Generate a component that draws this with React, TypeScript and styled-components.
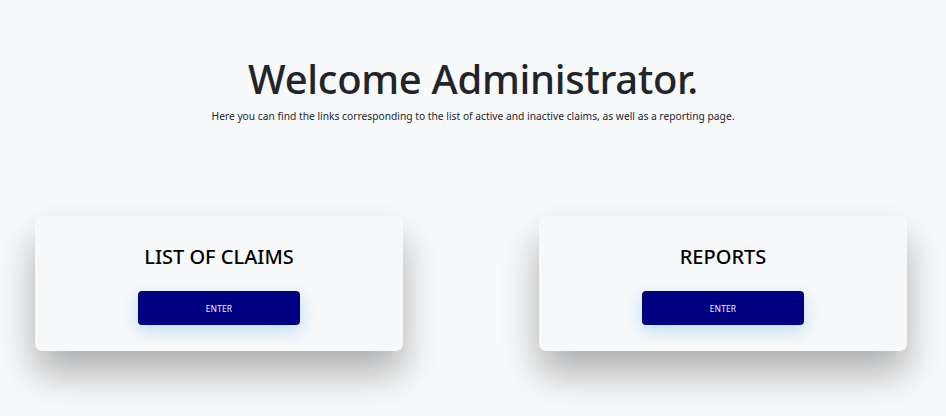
import React from "react";
import styled, { createGlobalStyle } from "styled-components";

const GlobalStyle = createGlobalStyle`
  html, body {
    margin: 0;
    padding: 0;
    background: #f8f9fa;
  }
  body {
    font-family: "Noto Sans", "Open Sans", sans-serif;
    color: #212529;
  }
  * { box-sizing: border-box; }
`;

const Page = styled.div`
  min-height: 416px;
  background: #f8f9fa;
  display: flex;
  flex-direction: column;
`;

const Header = styled.header`
  display: flex;
  flex-direction: column;
  align-items: center;
  padding-top: 55px;
`;

const Title = styled.h1`
  margin: 0;
  font-size: 40px;
  font-weight: 500;
  line-height: 48px;
  letter-spacing: -0.3px;
  color: #212529;
`;

const Subtitle = styled.p`
  margin: 5px 0 0;
  font-size: 10.25px;
  line-height: 16px;
  color: #212529;
`;

const CardsRow = styled.section`
  display: flex;
  justify-content: space-between;
  padding: 0 39px 0 35px;
  margin-top: 92px;
`;

const Card = styled.div`
  width: 368px;
  height: 135px;
  background: #f7f8fa;
  border-radius: 7px;
  box-shadow: 0 22px 38px rgba(0, 0, 0, 0.3);
  display: flex;
  flex-direction: column;
  align-items: center;
  padding-top: 28px;
`;

const CardTitle = styled.h2`
  margin: 0;
  font-size: 20px;
  font-weight: 500;
  line-height: 26px;
  color: #000;
`;

const EnterButton = styled.button`
  margin-top: 21px;
  width: 162px;
  height: 34px;
  border: none;
  border-radius: 4px;
  background: #000080;
  color: #eeeeff;
  font-family: "Noto Sans", "Open Sans", sans-serif;
  font-size: 8.5px;
  letter-spacing: 0.1px;
  cursor: pointer;
  box-shadow: 0 6px 16px rgba(120, 190, 240, 0.45);
`;

const cards = ["LIST OF CLAIMS", "REPORTS"];

export default function App() {
  return (
    <>
      <GlobalStyle />
      <Page>
        <Header>
          <Title>Welcome Administrator.</Title>
          <Subtitle>
            Here you can find the links corresponding to the list of active and inactive claims, as well as a
            reporting page.
          </Subtitle>
        </Header>
        <CardsRow>
          {cards.map((c) => (
            <Card key={c}>
              <CardTitle>{c}</CardTitle>
              <EnterButton>ENTER</EnterButton>
            </Card>
          ))}
        </CardsRow>
      </Page>
    </>
  );
}
